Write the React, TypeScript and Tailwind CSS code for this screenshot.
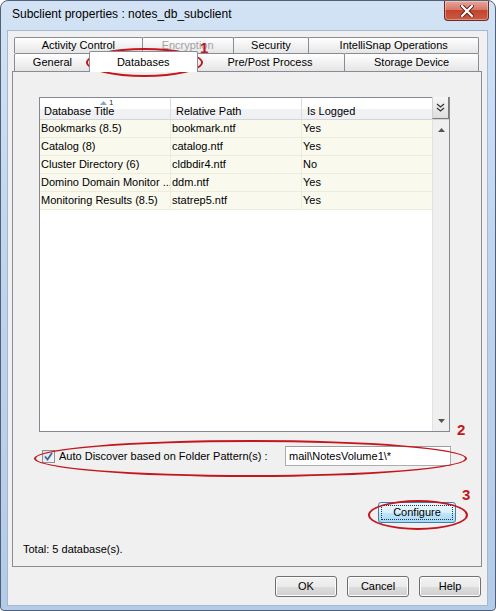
import React from 'react';

type Row = { title: string; path: string; logged: string };

const rows: Row[] = [
    { title: 'Bookmarks (8.5)', path: 'bookmark.ntf', logged: 'Yes' },
    { title: 'Catalog (8)', path: 'catalog.ntf', logged: 'Yes' },
    { title: 'Cluster Directory (6)', path: 'cldbdir4.ntf', logged: 'No' },
    { title: 'Domino Domain Monitor ...', path: 'ddm.ntf', logged: 'Yes' },
    { title: 'Monitoring Results (8.5)', path: 'statrep5.ntf', logged: 'Yes' },
];

// plain win7 push button
const WinButton: React.FC<{ label: string }> = ({ label }) => (
    <div className="w-[62px] h-[21px] rounded-[3px] border border-[#707070] bg-[linear-gradient(#f2f2f2_0%,#ebebeb_50%,#dddddd_51%,#cfcfcf_100%)] flex items-center justify-center text-[11px] text-black shadow-[inset_0_0_0_1px_#fcfcfc]">
        {label}
    </div>
);

const Tab: React.FC<{ label: string; w: string; disabled?: boolean }> = ({ label, w, disabled }) => (
    <div className={`${w} h-full border border-[#898c95] border-b-0 -ml-px first:ml-0 rounded-t-[2px] bg-[linear-gradient(#ffffff,#e5e5e5)] flex items-center justify-center text-[11px] ${disabled ? 'text-[#a3a3a3]' : 'text-black'}`}>
        {label}
    </div>
);

const CloseButton = () => (
    <div className="w-[45px] h-[20px] mr-[6px] rounded-b-[4px] border border-t-0 border-[#6b2a22] bg-[linear-gradient(#e7a597_0%,#d7786a_45%,#c3442f_50%,#cc5a40_100%)] flex items-center justify-center shadow-[inset_0_0_0_1px_rgba(255,255,255,0.35)]">
        <svg width="14" height="12" viewBox="0 0 14 12">
            <path d="M2 1 L12 11 M12 1 L2 11" stroke="#5a1e17" strokeWidth="4" strokeLinecap="square" />
            <path d="M2 1 L12 11 M12 1 L2 11" stroke="#ffffff" strokeWidth="2.2" strokeLinecap="square" />
        </svg>
    </div>
);

const Ellipse: React.FC<{ cls: string }> = ({ cls }) => (
    <div className={`absolute rounded-[50%] border-2 border-[#c4161c] pointer-events-none ${cls}`} />
);

const Num: React.FC<{ n: string; cls: string }> = ({ n, cls }) => (
    <div className={`absolute text-[15px] leading-none font-bold text-[#c4161c] ${cls}`}>{n}</div>
);

export default function App() {
    return (
        <div className="relative w-[496px] h-[611px] overflow-hidden rounded-t-[8px] rounded-b-[4px] border border-[#4f6178] bg-[linear-gradient(#d3e3f5,#c0d5ee_40%,#b4cbe8)] font-['Liberation_Sans',Arial,sans-serif]">
            {/* title bar */}
            <div className="flex h-[29px]">
                <div className="pl-[11px] pt-[7px] text-[12px] text-black leading-none">Subclient properties : notes_db_subclient</div>
                <div className="ml-auto">
                    <CloseButton />
                </div>
            </div>

            {/* client area */}
            <div className="ml-[6px] w-[481px] h-[576px] bg-[#f0f0f0] border border-[#a5b8d0] flex flex-col">
                {/* tab rows */}
                <div className="ml-[6px] mt-[6px] w-[465px]">
                    <div className="flex h-[16px]">
                        <Tab label="Activity Control" w="w-[129px]" />
                        <Tab label="Encryption" w="w-[92px]" disabled />
                        <Tab label="Security" w="w-[77px]" />
                        <Tab label="IntelliSnap Operations" w="w-[171px]" />
                    </div>
                    <div className="flex h-[18px]">
                        <Tab label="General" w="w-[77px]" />
                        <div className="relative z-10 w-[109px] -ml-[2px] -mr-[2px] -mt-[2px] h-[21px] border border-b-0 border-[#898c95] rounded-t-[2px] bg-white flex items-center justify-center text-[11px] text-black">
                            Databases
                        </div>
                        <Tab label="Pre/Post Process" w="w-[151px]" />
                        <Tab label="Storage Device" w="w-[135px]" />
                    </div>
                </div>

                {/* tab panel */}
                <div className="ml-[4px] w-[470px] h-[496px] border border-[#898c95] bg-[#f0f0f0] flex flex-col">
                    {/* database table */}
                    <div className="ml-[26px] mt-[25px] w-[411px] h-[335px] border border-[#828790] bg-white flex flex-col">
                        <div className="flex h-[22px] border-b border-[#d5d5d5] bg-[linear-gradient(#ffffff_0%,#ffffff_50%,#f1f2f4_51%,#eef0f3_100%)] text-[11px] text-black">
                            <div className="relative w-[131px] border-r border-[#dcdcdc] pl-[4px] pt-[8px] leading-none">
                                Database Title
                                <div className="absolute left-[60px] top-[1px] flex items-start gap-[2px]">
                                    <svg width="7" height="4" viewBox="0 0 7 4" className="mt-[2px]">
                                        <path d="M0 4 L3.5 0 L7 4 Z" fill="#8aa4c4" />
                                    </svg>
                                    <span className="text-[8px] leading-none text-[#333]">1</span>
                                </div>
                            </div>
                            <div className="w-[131px] border-r border-[#dcdcdc] pl-[5px] pt-[8px] leading-none">Relative Path</div>
                            <div className="w-[130px] pl-[5px] pt-[8px] leading-none">Is Logged</div>
                            <div className="w-[17px] h-[22px] -mt-px bg-[linear-gradient(#f6f6f6,#dedede)] border-l border-[#d0d0d0] border-r border-b border-r-[#7a7a7a] border-b-[#7a7a7a] flex items-center justify-center">
                                <svg width="9" height="9" viewBox="0 0 9 9">
                                    <path d="M1 1 L4.5 4 L8 1 M1 5 L4.5 8 L8 5" stroke="#333" strokeWidth="1.2" fill="none" />
                                </svg>
                            </div>
                        </div>
                        <div className="flex flex-1">
                            <div className="w-[392px] flex flex-col">
                                {rows.map((r, i) => (
                                    <div key={i} className="flex h-[18px] border-b border-[#ececdc] bg-[#f9f9ee] text-[11px] text-black leading-[17px]">
                                        <div className="w-[131px] border-r border-[#ececdc] pl-[1px] whitespace-nowrap overflow-hidden">{r.title}</div>
                                        <div className="w-[131px] border-r border-[#ececdc] pl-[1px]">{r.path}</div>
                                        <div className="w-[130px] pl-[1px]">{r.logged}</div>
                                    </div>
                                ))}
                            </div>
                            <div className="w-[17px] bg-[#efefef] border-l border-[#e2e2e2] flex flex-col items-center justify-between py-[8px]">
                                <svg width="7" height="4" viewBox="0 0 7 4">
                                    <path d="M0 4 L3.5 0 L7 4 Z" fill="#555" />
                                </svg>
                                <svg width="7" height="4" viewBox="0 0 7 4">
                                    <path d="M0 0 L3.5 4 L7 0 Z" fill="#555" />
                                </svg>
                            </div>
                        </div>
                    </div>

                    {/* auto discover */}
                    <div className="ml-[29px] mt-[14px] w-[409px] h-[20px] flex items-center">
                        <div className="w-[13px] h-[13px] border border-[#8e8f8f] bg-[linear-gradient(135deg,#d9dfe8,#f6f8fa)] flex items-center justify-center">
                            <svg width="9" height="9" viewBox="0 0 9 9">
                                <path d="M1 4.5 L3.5 7.5 L8 1" stroke="#4a5f9a" strokeWidth="1.8" fill="none" />
                            </svg>
                        </div>
                        <span className="ml-[4px] text-[11px] text-black">Auto Discover based on Folder Pattern(s) :</span>
                        <div className="ml-auto w-[166px] h-[20px] border border-[#abadb3] border-t-[#9c9c9c] bg-white pl-[3px] flex items-center text-[11px] text-black">
                            mail\NotesVolume1\*
                        </div>
                    </div>

                    {/* configure */}
                    <div className="mt-[36px] mr-[25px] self-end w-[78px] h-[21px] rounded-[3px] border border-[#3c7fb1] bg-[linear-gradient(#eaf6fd_0%,#d9f0fc_50%,#bee6fd_51%,#a7d9f5_100%)] p-[2px]">
                        <div className="w-full h-full border border-dotted border-[#333] flex items-center justify-center text-[11px] text-black">
                            Configure
                        </div>
                    </div>

                    <div className="ml-[10px] mt-[20px] text-[11px] text-black leading-[13px]">Total: 5 database(s).</div>
                </div>

                {/* dialog buttons */}
                <div className="mt-[9px] mr-[6px] self-end flex gap-[10px]">
                    <WinButton label="OK" />
                    <WinButton label="Cancel" />
                    <WinButton label="Help" />
                </div>
            </div>

            {/* annotations */}
            <Ellipse cls="left-[85px] top-[47px] w-[117px] h-[29px]" />
            <Num n="1" cls="left-[199px] top-[39px]" />
            <Ellipse cls="left-[33px] top-[439px] w-[433px] h-[37px]" />
            <Num n="2" cls="left-[456px] top-[421px]" />
            <Ellipse cls="left-[367px] top-[499px] w-[100px] h-[30px]" />
            <Num n="3" cls="left-[461px] top-[486px]" />
        </div>
    );
}
